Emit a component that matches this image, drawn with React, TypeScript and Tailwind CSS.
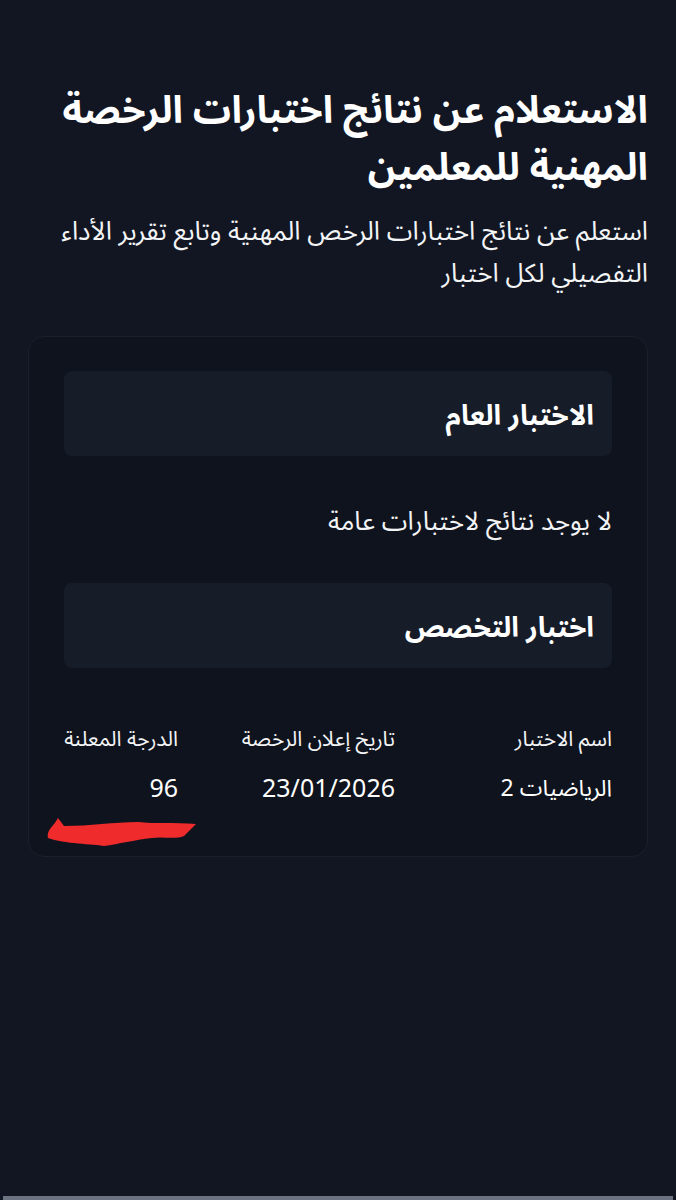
export default function App() {
  return (
    <div
      dir="rtl"
      className="relative min-h-[1200px] w-full bg-[#111622] text-white"
      style={{ fontFamily: '"Noto Sans", "Noto Sans Arabic", "DejaVu Sans", sans-serif' }}
    >
      <div className="px-[28px] pt-[80px]">
        <h1 className="text-[38px] font-bold leading-[57px]">
          الاستعلام عن نتائج اختبارات الرخصة المهنية للمعلمين
        </h1>
        <p className="mt-[15px] text-[26px] leading-[42px] text-gray-100">
          استعلم عن نتائج اختبارات الرخص المهنية وتابع تقرير الأداء التفصيلي لكل اختبار
        </p>

        <section className="mt-[43px] rounded-2xl border border-[#1a1f2b] bg-[#0f131d] px-[35px] pt-[34px] pb-[6px]">
          <div className="flex h-[85px] items-center rounded-lg bg-[#161c28] px-[18px]">
            <h2 className="text-[28px] font-bold">الاختبار العام</h2>
          </div>

          <p className="mt-[46px] text-[26px] leading-[36px] text-gray-100">لا يوجد نتائج لاختبارات عامة</p>

          <div className="mt-[45px] flex h-[85px] items-center rounded-lg bg-[#161c28] px-[18px]">
            <h2 className="text-[28px] font-bold">اختبار التخصص</h2>
          </div>

          <div className="mt-[55px] grid grid-cols-[217px_217px_1fr] gap-y-[17px]">
            <div className="text-[21px] leading-[30px] text-gray-100">اسم الاختبار</div>
            <div className="text-[21px] leading-[30px] text-gray-100">تاريخ إعلان الرخصة</div>
            <div className="text-[21px] leading-[30px] text-gray-100">الدرجة المعلنة</div>
            <div className="text-[23px] leading-[34px]">الرياضيات 2</div>
            <div className="text-[25px] leading-[34px]">23/01/2026</div>
            <div className="text-[25px] leading-[34px]">96</div>
          </div>

          <div className="flex justify-end">
            <svg width="160" height="36" viewBox="0 0 160 36" className="-ml-[20px] mt-[10px]">
              <path
                d="M14 4 C10 12 2 16 4 24 C20 30 50 30 60 32 C75 30 90 26 108 24 C120 22 130 26 140 22 L152 10 C130 8 110 10 94 8 C70 8 46 12 20 12 Z"
                fill="#ef2b2b"
              />
            </svg>
          </div>
        </section>
      </div>
      <div className="absolute bottom-0 left-[3px] right-[3px] h-[4px] bg-[#6b7280]" />
    </div>
  )
}
